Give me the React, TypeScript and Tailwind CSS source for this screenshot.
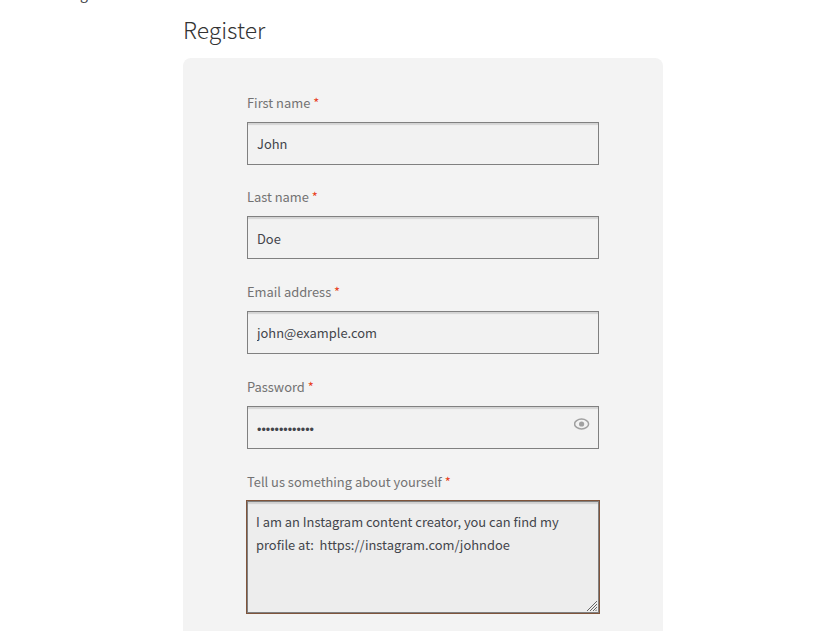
import React from "react";

interface FieldProps {
  id: string;
  label: string;
  children: React.ReactNode;
}

const Field: React.FC<FieldProps> = ({ id, label, children }) => (
  <div className="mb-[21.7px]">
    <label
      htmlFor={id}
      className="block h-[22.65px] mb-[7.45px] leading-[22.65px] whitespace-nowrap text-[#727272]"
    >
      {label} <span className="text-[#e8401c]">*</span>
    </label>
    {children}
  </div>
);

const inputClass =
  "block w-full h-[43px] px-[9px] border border-[#808080] bg-[#f2f2f2] text-[#43454b] outline-none shadow-[inset_0_3px_1px_-1px_rgba(0,0,0,0.12)]";

const EyeIcon: React.FC = () => (
  <svg width="16" height="12" viewBox="0 0 16 12" fill="none">
    <ellipse cx="7.6" cy="6" rx="7" ry="4.9" stroke="#a0a0a0" strokeWidth="1.5" />
    <circle cx="7.6" cy="6" r="2.6" fill="#a0a0a0" />
  </svg>
);

const ResizeGrip: React.FC = () => (
  <svg width="10" height="10" viewBox="0 0 10 10">
    <path
      d="M0 10L10 0M3 10L10 3M6 10L10 6M8.5 10L10 8.5"
      stroke="#666666"
      strokeWidth="1"
    />
  </svg>
);

const App: React.FC = () => {
  return (
    <div className="relative h-[631px] overflow-hidden bg-white font-['Noto_Sans_CJK_JP',sans-serif] text-[12.9px]">
      {/* tail of the breadcrumb, scrolled out of view */}
      <div className="absolute left-[80px] top-[-18px] leading-[23px] text-[14px] text-[#43454b]">
        g
      </div>

      <div className="w-[480px] ml-[183px] pt-[12px]">
        <h2 className="h-[46px] leading-[34px] text-[22.9px] font-light text-[#333333]">
          Register
        </h2>

        <form className="h-[600px] rounded-t-[8px] bg-[#f3f3f3] px-[64px] pt-[33.5px]">
          <Field id="first_name" label="First name">
            <input
              id="first_name"
              className={`${inputClass} pt-[1px]`}
              defaultValue="John"
            />
          </Field>
          <Field id="last_name" label="Last name">
            <input
              id="last_name"
              className={`${inputClass} pt-[2px]`}
              defaultValue="Doe"
            />
          </Field>
          <Field id="email" label="Email address">
            <input
              id="email"
              className={`${inputClass} pt-0`}
              defaultValue="john@example.com"
            />
          </Field>
          <Field id="password" label="Password">
            <div className="relative">
              <input
                id="password"
                type="password"
                className={`${inputClass} pt-[5px] font-['Liberation_Sans',sans-serif] text-[12.5px]`}
                defaultValue="johndoe123456"
              />
              <span className="absolute right-[9px] top-[12px]">
                <EyeIcon />
              </span>
            </div>
          </Field>
          <Field id="about" label="Tell us something about yourself">
            <div className="relative -mx-px -mt-[0.5px]">
              <textarea
                id="about"
                className="block w-full h-[114px] resize-none border border-[#7f543b] bg-[#ededed] px-[9px] pt-[10px] leading-[22.65px] text-[#43454b] outline-none shadow-[inset_0_0_0_1px_#808080,inset_0_4px_1px_-1px_rgba(0,0,0,0.12)]"
                defaultValue={
                  "I am an Instagram content creator, you can find my\nprofile at:  https://instagram.com/johndoe"
                }
              />
              <span className="absolute right-[3px] bottom-[3px]">
                <ResizeGrip />
              </span>
            </div>
          </Field>
        </form>
      </div>
    </div>
  );
};

export default App;
